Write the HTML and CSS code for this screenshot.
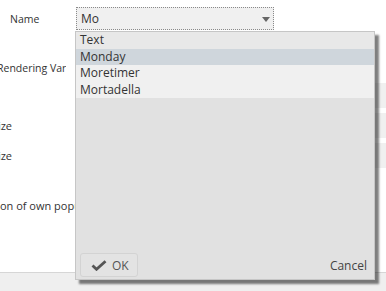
FILE: index.html
```html
<!DOCTYPE html>
<html lang="en">
<head>
    <meta charset="UTF-8">
    <title>Properties</title>
    <link rel="stylesheet" href="styles.css">
</head>
<body>
    <div id="dialog">
        <div class="form">
            <div class="row row-name">
                <label class="lbl lbl-name">Name</label>
                <div class="combo">
                    <span>Mo</span>
                    <span class="arrow"></span>
                </div>
            </div>
            <div class="row row-variant">
                <label class="lbl lbl-variant">Rendering Variant</label>
            </div>
            <div class="row">
                <span class="lbl"></span>
                <div class="field"></div>
            </div>
            <div class="row">
                <span class="lbl lbl-end"><span>Min Size</span></span>
                <div class="field"></div>
            </div>
            <div class="row">
                <span class="lbl lbl-end"><span>Max Size</span></span>
                <div class="field"></div>
            </div>
            <div class="row row-popup">
                <label class="lbl lbl-popup">Position of own popup</label>
            </div>
        </div>
        <div class="footer"></div>

        <div class="popup">
            <ul class="options">
                <li class="head">Text</li>
                <li class="selected">Monday</li>
                <li>Moretimer</li>
                <li>Mortadella</li>
            </ul>
            <div class="popup-foot">
                <button class="btn-ok" type="button">
                    <svg width="16" height="11" viewBox="0 0 16 11">
                        <path d="M1.5 5.5 L5.5 9.3 L14.5 1.2" fill="none" stroke="#555" stroke-width="2.8"/>
                    </svg>
                    OK
                </button>
                <span class="cancel">Cancel</span>
            </div>
        </div>
    </div>
</body>
</html>
```

FILE: styles.css
```css
body {
    margin: 0;
    font-family: 'Open Sans', 'Segoe UI', sans-serif;
    color: #333;
    background-color: #fff;
    overflow: hidden;
}

#dialog {
    position: relative;
    width: 386px;
    height: 291px;
    overflow: hidden;
}

.form {
    height: 272px;
    box-sizing: border-box;
    padding-top: 7px;
    display: flex;
    flex-direction: column;
}

.row {
    display: flex;
    align-items: center;
    height: 30px;
    flex: none;
}

.row-name {
    height: 23px;
    margin-bottom: 20px;
}

.row-variant .lbl {
    margin-top: 5px;
}

.row-popup {
    margin-top: 20px;
}

.lbl {
    width: 76px;
    flex: none;
    font-size: 11px;
    white-space: nowrap;
    overflow: hidden;
}

.lbl-name {
    padding-left: 10px;
    font-size: 10.5px;
    box-sizing: border-box;
}

.lbl-variant {
    width: 66px;
    font-size: 10.5px;
    text-indent: -3px;
}

.lbl-end {
    display: flex;
    justify-content: flex-end;
    width: 12px;
    margin-right: 64px;
}

.lbl-end span {
    flex: none;
}

.lbl-popup {
    overflow: visible;
    margin-left: -28px;
}

.combo {
    width: 198px;
    height: 23px;
    box-sizing: border-box;
    border: 1px dotted #8a8a8a;
    background-color: #f0f0f0;
    display: flex;
    align-items: center;
    justify-content: space-between;
    padding: 0 3px 0 4px;
    font-size: 12px;
}

.arrow {
    width: 0;
    height: 0;
    border-left: 4px solid transparent;
    border-right: 4px solid transparent;
    border-top: 5px solid #666;
    margin-top: 1px;
}

.field {
    width: 330px;
    height: 25px;
    flex: none;
    background-color: #f0f0f0;
}

.footer {
    height: 19px;
    background-color: #efefef;
    border-top: 1px solid #d6d6d6;
}

/* dropdown list */
.popup {
    position: absolute;
    left: 75px;
    top: 31px;
    width: 300px;
    height: 249px;
    box-sizing: border-box;
    border: 1px solid #c6c6c6;
    background-color: #e1e1e1;
    box-shadow: 4px 4px 2px rgba(0, 0, 0, 0.5);
    display: flex;
    flex-direction: column;
    font-size: 12px;
}

.options {
    list-style: none;
    margin: 0;
    padding: 0;
    flex: 1;
}

.options li {
    line-height: 16.5px;
    padding-left: 4px;
    background-color: #f0f0f0;
}

.options li.head {
    background-color: #e8e8e8;
}

.options li.selected {
    background-color: #cfd6dc;
}

.popup-foot {
    display: flex;
    align-items: center;
    justify-content: space-between;
    padding: 0 7px 2px 4px;
}

.btn-ok {
    display: flex;
    align-items: center;
    gap: 5px;
    width: 58px;
    height: 24px;
    padding: 0 0 0 10px;
    border: 1px solid #d3d3d3;
    border-radius: 3px;
    background-color: #e3e3e3;
    color: #555;
    font-family: inherit;
    font-size: 12px;
}

.cancel {
    color: #444;
}
```
